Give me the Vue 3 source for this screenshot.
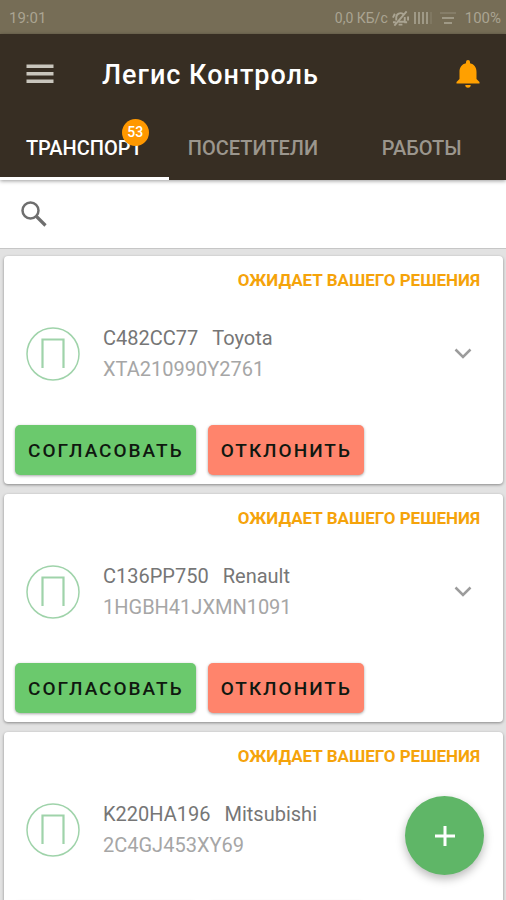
<script setup>
import { ref } from 'vue'

const tabs = [
  { id: 'transport', label: 'ТРАНСПОРТ', badge: 53 },
  { id: 'visitors', label: 'ПОСЕТИТЕЛИ' },
  { id: 'works', label: 'РАБОТЫ' },
]
const active = ref('transport')
const query = ref('')

const requests = [
  { plate: 'C482CC77', model: 'Toyota', vin: 'XTA210990Y2761' },
  { plate: 'C136PP750', model: 'Renault', vin: '1HGBH41JXMN1091' },
  { plate: 'K220HA196', model: 'Mitsubishi', vin: '2C4GJ453XY69' },
]
</script>

<template>
  <div class="app">
    <div class="status-bar">
      <span>19:01</span>
      <div class="indicators">
        <span>0,0 КБ/с</span>
        <svg class="mute" viewBox="0 0 18 18" width="17" height="17" fill="none" stroke="currentColor" stroke-width="2">
          <path d="M4.500 11V8a4.500 4.500 0 0 1 7.500-3.500M13.500 7.500v5H7M1 13h3M13 13h3M7 15.500h4M2.500 16.500 15.500 1.500M1 8l2-4M17 7v4" />
        </svg>
        <svg class="signal" viewBox="0 0 20 14" width="20" height="14" stroke="currentColor" stroke-width="2">
          <path d="M2 1v12M6 1v12M10 1v12M14 1v12" opacity=".8" />
          <path d="M18 1v12" opacity=".2" />
        </svg>
        <svg class="wifi" viewBox="0 0 18 14" width="18" height="14" stroke="currentColor" stroke-width="2">
          <path d="M1 2h16" opacity=".3" />
          <path d="M3 7h12M5 12h8" opacity=".8" />
        </svg>
        <span class="battery">100%</span>
      </div>
    </div>

    <header class="header">
      <div class="toolbar">
        <button class="icon-button menu" type="button" aria-label="Меню">
          <svg viewBox="0 0 28 20" width="28" height="20" fill="#c9c6bd">
            <path d="M.5 0.500h27v3.500h-27zM.5 8h27v3.500h-27zM.5 15.500h27v3.500h-27z" />
          </svg>
        </button>
        <h1>Легис Контроль</h1>
        <button class="icon-button bell" type="button" aria-label="Уведомления">
          <svg viewBox="0 0 24 28" width="24" height="28" fill="#ffa000">
            <path d="M12 0a2 2 0 0 0-2 2v1.300C5.800 4.200 3.500 7.500 3.500 12v7L.5 22v1.500h23V22l-3-3v-7c0-4.500-2.300-7.800-6.500-8.700V2a2 2 0 0 0-2-2zM9.300 25a2.700 2.700 0 0 0 5.400 0z" />
          </svg>
        </button>
      </div>
      <nav class="tabs">
        <button
          v-for="tab in tabs"
          :key="tab.id"
          type="button"
          class="tab"
          :class="{ active: active === tab.id }"
          @click="active = tab.id"
        >
          <span class="tab-label">
            {{ tab.label }}
            <span v-if="tab.badge" class="badge">{{ tab.badge }}</span>
          </span>
        </button>
      </nav>
    </header>

    <label class="search">
      <svg viewBox="0 0 26 26" width="26" height="26" fill="none" stroke="#6e6e6e">
        <circle cx="9.500" cy="9.500" r="8" stroke-width="2.500" />
        <path d="M15.500 15.500 24.500 24.500" stroke-width="3.200" />
      </svg>
      <input v-model="query" type="search" aria-label="Поиск" />
    </label>

    <main class="list">
      <article v-for="item in requests" :key="item.plate" class="card">
        <p class="state">ОЖИДАЕТ ВАШЕГО РЕШЕНИЯ</p>
        <div class="body">
          <svg class="kind" viewBox="0 0 54 54" width="54" height="54" fill="none" stroke="#9fd3aa">
            <circle cx="27" cy="27" r="26" stroke-width="1.500" />
            <path d="M16.500 41V12.500h21V41" stroke-width="2.200" />
          </svg>
          <div class="info">
            <p class="name"><span>{{ item.plate }}</span><span>{{ item.model }}</span></p>
            <p class="vin">{{ item.vin }}</p>
          </div>
          <button class="icon-button expand" type="button" aria-label="Подробнее">
            <svg viewBox="0 0 18 12" width="18" height="12" fill="none" stroke="#9c9c9c" stroke-width="2.500">
              <path d="M1.500 1.500 9 9l7.500-7.500" />
            </svg>
          </button>
        </div>
        <div class="actions">
          <button class="action approve" type="button">СОГЛАСОВАТЬ</button>
          <button class="action reject" type="button">ОТКЛОНИТЬ</button>
        </div>
      </article>
    </main>

    <button class="fab" type="button" aria-label="Добавить">
      <svg viewBox="0 0 22 22" width="22" height="22" stroke="#fff" stroke-width="3">
        <path d="M11 1v20M1 11h20" />
      </svg>
    </button>
  </div>
</template>

<style>
body {
  margin: 0;
}
</style>

<style scoped>
.app {
  display: flex;
  flex-direction: column;
  height: 100vh;
  background: #e2e2e2;
  font-family: Roboto, "Liberation Sans", sans-serif;
}
svg {
  display: block;
}
h1,
p {
  margin: 0;
}
button {
  border: 0;
  padding: 0;
  background: none;
  font-family: inherit;
  cursor: pointer;
}
.status-bar {
  display: flex;
  flex: none;
  align-items: center;
  justify-content: space-between;
  height: 32px;
  padding: 2px 5px 0 9px;
  background: #766d56;
  color: #aaa492;
  font-size: 15px;
}
.indicators {
  display: flex;
  align-items: center;
  gap: 4px;
  font-size: 14px;
}
.wifi {
  margin-left: 2px;
}
.battery {
  margin-left: 4px;
  font-size: 15px;
}
.header {
  position: relative;
  flex: none;
  background: #372e23;
  box-shadow: 0 1px 4px rgba(0, 0, 0, 0.4);
}
.toolbar {
  display: flex;
  align-items: center;
  height: 80px;
  padding: 0 26px;
}
.icon-button {
  display: flex;
  flex: none;
}
h1 {
  flex: 1;
  margin-left: 48px;
  padding-top: 2px;
  color: #fff;
  font-size: 27px;
  font-weight: 500;
  letter-spacing: 1px;
}
.tabs {
  display: grid;
  grid-template-columns: repeat(3, 1fr);
}
.tab {
  height: 66px;
  padding-top: 4px;
  border-bottom: 3px solid transparent;
  color: #9b968d;
  font-size: 20px;
  font-weight: 500;
}
.tab.active {
  border-bottom-color: #fff;
  color: #fff;
}
.tab-label {
  position: relative;
}
.badge {
  position: absolute;
  top: -17px;
  right: -6px;
  width: 27px;
  height: 27px;
  border-radius: 50%;
  background: #ff9800;
  color: #fff;
  font-size: 14px;
  line-height: 27px;
  text-align: center;
}
.search {
  display: flex;
  flex: none;
  align-items: center;
  gap: 16px;
  height: 68px;
  padding: 0 21px;
  border-bottom: 1px solid #c6c6c6;
  background: #fff;
}
.search input {
  flex: 1;
  min-width: 0;
  border: 0;
  outline: 0;
  background: none;
  font: inherit;
  font-size: 20px;
}
.list {
  display: flex;
  flex: 1;
  flex-direction: column;
  gap: 10px;
  min-height: 0;
  padding: 7px 3px 10px 4px;
  overflow-y: auto;
  scrollbar-width: none;
}
.card {
  flex: none;
  padding-bottom: 9px;
  border-radius: 4px;
  background: #fff;
  box-shadow: 0 1px 3px rgba(0, 0, 0, 0.4);
}
.state {
  padding: 12px 23px 0;
  color: #f5a30a;
  font-size: 17px;
  font-weight: 700;
  line-height: 24px;
  text-align: right;
}
.body {
  display: flex;
  align-items: center;
  height: 124px;
  padding: 0 31px 0 22px;
}
.info {
  flex: 1;
  margin-left: 23px;
  font-size: 20px;
  line-height: 31px;
}
.name {
  display: flex;
  gap: 14px;
  color: #767676;
}
.vin {
  color: #a6a6a6;
}
.actions {
  display: flex;
  gap: 12px;
  padding: 9px 11px 0;
}
.action {
  height: 50px;
  padding: 0 12px 0 13px;
  border-radius: 5px;
  color: #101810;
  font-size: 19px;
  font-weight: 500;
  letter-spacing: 2px;
  box-shadow: 0 1px 3px rgba(0, 0, 0, 0.35);
}
.approve {
  background: #6bc96d;
}
.reject {
  background: #ff846c;
}
.fab {
  position: fixed;
  right: 22px;
  bottom: 25px;
  display: grid;
  place-items: center;
  width: 79px;
  height: 79px;
  border-radius: 50%;
  background: #5fb667;
  box-shadow: 0 4px 10px rgba(0, 0, 0, 0.28);
}
</style>
